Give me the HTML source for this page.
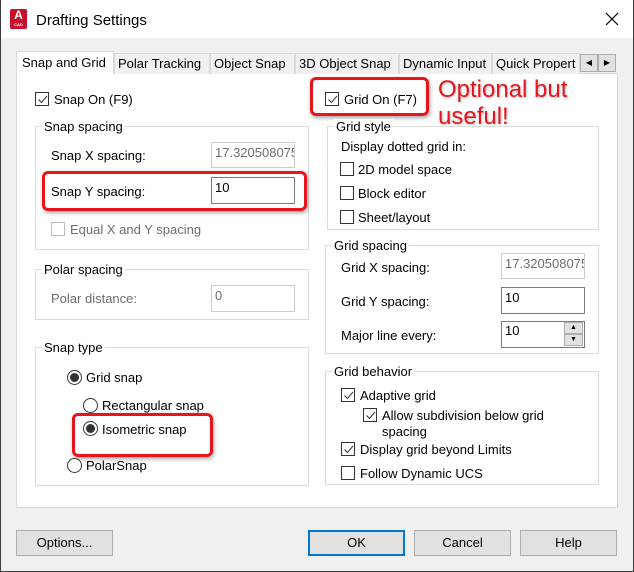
<!DOCTYPE html>
<html><head><meta charset="utf-8"><style>
*{margin:0;padding:0;box-sizing:border-box}
body{width:634px;height:572px;position:relative;overflow:hidden;background:#f0f0f0;font-family:"Liberation Sans",sans-serif;font-size:13px;color:#000}
.a{position:absolute}
.t{position:absolute;line-height:16px;white-space:nowrap;margin-top:1px}
.g{color:#6d6d6d}
.cb{position:absolute;width:14px;height:14px;border:1px solid #333;background:#fff}
.cb.dis{border-color:#bcbcbc}
.cb svg{position:absolute;left:1px;top:1px}
.rd{position:absolute;width:15px;height:15px;border:1px solid #333;border-radius:50%;background:#fff}
.rd.on::after{content:"";position:absolute;left:2px;top:2px;width:9px;height:9px;border-radius:50%;background:#333}
.grp{position:absolute;border:1px solid #dcdcdc}
.lg{position:absolute;background:#fff;padding:0 2px;line-height:16px;white-space:nowrap}
.in{position:absolute;border:1px solid #7a7a7a;background:#fff;padding:2px 3px;line-height:16px;overflow:hidden;white-space:nowrap}
.in.dis{border-color:#ccc;color:#6d6d6d}
.tab{position:absolute;top:53px;height:21px;border:1px solid #d9d9d9;border-bottom:none;background:#f0f0f0;line-height:19px;padding-left:3px;white-space:nowrap;overflow:hidden}
.btn{position:absolute;top:530px;height:26px;width:97px;border:1px solid #adadad;background:#e1e1e1;text-align:center;line-height:24px}
.red{position:absolute;border:3px solid #e8141b;border-radius:6px;box-shadow:1px 2px 4px rgba(0,0,0,.35)}
</style></head><body>
<div class="a" style="left:0;top:0;width:634px;height:38px;background:#fff"></div>
<div class="a" style="left:10px;top:9px;width:17px;height:20px;background:#c8102e;border-radius:2px;color:#fff;font-weight:bold;font-size:12px;line-height:13px;text-align:center">A<div style="font-size:4px;line-height:5px">CAD</div></div>
<div class="t" style="left:36px;top:11px;font-size:15px;line-height:18px">Drafting Settings</div>
<svg class="a" style="left:605px;top:12px" width="14" height="14"><path d="M1 1L13 13M13 1L1 13" stroke="#000" stroke-width="1.2"/></svg>
<div class="a" style="left:0;top:0;width:634px;height:572px;border:1px solid #3c3c3c;border-top:none;pointer-events:none"></div>

<div class="a" style="left:16px;top:73px;width:602px;height:435px;background:#fff;border:1px solid #d9d9d9"></div>
<div class="tab" style="left:16px;top:51px;height:23px;width:98px;background:#fff;padding-left:5px;line-height:22px">Snap and Grid</div>
<div class="tab" style="left:114px;width:96px;line-height:20px">Polar Tracking</div>
<div class="tab" style="left:210px;width:85px;line-height:20px">Object Snap</div>
<div class="tab" style="left:295px;width:104px;line-height:20px">3D Object Snap</div>
<div class="tab" style="left:399px;width:93px;line-height:20px">Dynamic Input</div>
<div class="tab" style="left:492px;width:88px;line-height:20px">Quick Propert</div>
<div class="a" style="left:580px;top:54px;width:18px;height:18px;border:1px solid #adadad;background:#e1e1e1;font-size:8px;text-align:center;line-height:16px">◀</div>
<div class="a" style="left:598px;top:54px;width:18px;height:18px;border:1px solid #adadad;background:#e1e1e1;font-size:8px;text-align:center;line-height:16px">▶</div>

<!-- left -->
<div class="cb" style="left:35px;top:92px"><svg width="11" height="11"><path d="M1.5 5.5L4.5 8.5L10 2" fill="none" stroke="#333" stroke-width="1"/></svg></div>
<div class="t" style="left:54px;top:91px">Snap On (F9)</div>

<div class="grp" style="left:35px;top:126px;width:274px;height:124px"></div>
<div class="lg" style="left:42px;top:119px">Snap spacing</div>
<div class="t" style="left:51px;top:147px">Snap X spacing:</div>
<div class="in dis" style="left:211px;top:142px;width:84px;height:26px">17.320508075</div>
<div class="t" style="left:51px;top:183px">Snap Y spacing:</div>
<div class="in" style="left:211px;top:177px;width:84px;height:27px">10</div>
<div class="red" style="left:42px;top:171px;width:265px;height:40px"></div>
<div class="cb dis" style="left:51px;top:222px"></div>
<div class="t g" style="left:70px;top:221px">Equal X and Y spacing</div>

<div class="grp" style="left:35px;top:269px;width:274px;height:51px"></div>
<div class="lg" style="left:42px;top:262px">Polar spacing</div>
<div class="t g" style="left:51px;top:290px">Polar distance:</div>
<div class="in dis" style="left:211px;top:285px;width:84px;height:27px">0</div>

<div class="grp" style="left:35px;top:347px;width:274px;height:139px"></div>
<div class="lg" style="left:42px;top:340px">Snap type</div>
<div class="rd on" style="left:67px;top:370px"></div>
<div class="t" style="left:86px;top:369px">Grid snap</div>
<div class="rd" style="left:83px;top:398px"></div>
<div class="t" style="left:102px;top:397px">Rectangular snap</div>
<div class="rd on" style="left:83px;top:421px"></div>
<div class="t" style="left:102px;top:421px">Isometric snap</div>
<div class="red" style="left:72px;top:413px;width:141px;height:44px"></div>
<div class="rd" style="left:67px;top:458px"></div>
<div class="t" style="left:86px;top:457px">PolarSnap</div>

<!-- right -->
<div class="cb" style="left:325px;top:92px"><svg width="11" height="11"><path d="M1.5 5.5L4.5 8.5L10 2" fill="none" stroke="#333" stroke-width="1"/></svg></div>
<div class="t" style="left:344px;top:91px">Grid On (F7)</div>
<div class="red" style="left:310px;top:77px;width:119px;height:39px"></div>
<div class="t" style="left:438px;top:75px;color:#e8141b;font-size:24px;line-height:27px;text-shadow:1px 1px 2px rgba(0,0,0,.25)">Optional but<br>useful!</div>

<div class="grp" style="left:327px;top:126px;width:272px;height:104px"></div>
<div class="lg" style="left:334px;top:119px">Grid style</div>
<div class="t" style="left:341px;top:138px">Display dotted grid in:</div>
<div class="cb" style="left:340px;top:162px"></div><div class="t" style="left:358px;top:161px">2D model space</div>
<div class="cb" style="left:340px;top:186px"></div><div class="t" style="left:358px;top:185px">Block editor</div>
<div class="cb" style="left:340px;top:210px"></div><div class="t" style="left:358px;top:209px">Sheet/layout</div>

<div class="grp" style="left:325px;top:245px;width:274px;height:109px"></div>
<div class="lg" style="left:332px;top:238px">Grid spacing</div>
<div class="t" style="left:341px;top:259px">Grid X spacing:</div>
<div class="in dis" style="left:501px;top:253px;width:84px;height:26px">17.320508075</div>
<div class="t" style="left:341px;top:293px">Grid Y spacing:</div>
<div class="in" style="left:501px;top:287px;width:84px;height:27px">10</div>
<div class="t" style="left:341px;top:327px">Major line every:</div>
<div class="in" style="left:501px;top:321px;width:84px;height:27px;padding-top:1px">10</div>
<div class="a" style="left:564px;top:322px;width:19px;height:12px;border:1px solid #adadad;background:#e1e1e1;font-size:7px;text-align:center;line-height:10px">▲</div>
<div class="a" style="left:564px;top:334px;width:19px;height:12px;border:1px solid #adadad;background:#e1e1e1;font-size:7px;text-align:center;line-height:10px">▼</div>

<div class="grp" style="left:325px;top:371px;width:274px;height:114px"></div>
<div class="lg" style="left:332px;top:364px">Grid behavior</div>
<div class="cb" style="left:341px;top:388px"><svg width="11" height="11"><path d="M1.5 5.5L4.5 8.5L10 2" fill="none" stroke="#333" stroke-width="1"/></svg></div>
<div class="t" style="left:360px;top:387px">Adaptive grid</div>
<div class="cb" style="left:363px;top:408px"><svg width="11" height="11"><path d="M1.5 5.5L4.5 8.5L10 2" fill="none" stroke="#333" stroke-width="1"/></svg></div>
<div class="t" style="left:382px;top:407px">Allow subdivision below grid<br>spacing</div>
<div class="cb" style="left:341px;top:442px"><svg width="11" height="11"><path d="M1.5 5.5L4.5 8.5L10 2" fill="none" stroke="#333" stroke-width="1"/></svg></div>
<div class="t" style="left:360px;top:441px">Display grid beyond Limits</div>
<div class="cb" style="left:341px;top:466px"></div>
<div class="t" style="left:360px;top:465px">Follow Dynamic UCS</div>

<div class="btn" style="left:16px">Options...</div>
<div class="btn" style="left:308px;border:2px solid #0078d7;line-height:22px">OK</div>
<div class="btn" style="left:414px">Cancel</div>
<div class="btn" style="left:520px">Help</div>
</body></html>
